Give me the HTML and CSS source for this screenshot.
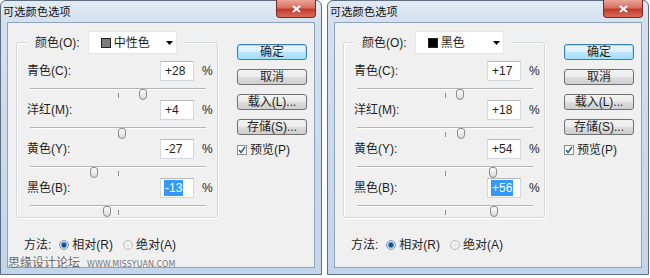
FILE: index.html
```html
<!DOCTYPE html>
<html lang="zh">
<head>
    <meta charset="UTF-8">
    <title>可选颜色选项</title>
    <link rel="stylesheet" href="styles.css">
</head>
<body>
<div class="page">

    <!-- left dialog: 中性色 -->
    <div class="dialog">
        <div class="titlebar">
            <span class="title">可选颜色选项</span>
            <span class="close"><svg width="9" height="8" viewBox="0 0 9 8"><path d="M1 1 L8 7 M8 1 L1 7" stroke="#fff" stroke-width="2"/></svg></span>
        </div>
        <div class="client">
            <div class="main">
                <div class="group">
                    <div class="group-head">
                        <span class="label">颜色(O):</span>
                        <div class="select">
                            <span class="swatch swatch-gray"></span>
                            <span class="select-text">中性色</span>
                            <svg class="arrow" width="7" height="4" viewBox="0 0 7 4"><path d="M0 0 H7 L3.5 4 Z" fill="#000"/></svg>
                        </div>
                    </div>
                    <div class="rows">
                        <div class="row">
                            <div class="row-head">
                                <span class="row-label">青色(C):</span>
                                <span class="field">+28</span>
                                <span class="pct">%</span>
                            </div>
                            <div class="slider"><div class="track"></div><span class="tick"></span><span class="thumb" style="left: 64%"></span></div>
                        </div>
                        <div class="row">
                            <div class="row-head">
                                <span class="row-label">洋红(M):</span>
                                <span class="field">+4</span>
                                <span class="pct">%</span>
                            </div>
                            <div class="slider"><div class="track"></div><span class="tick"></span><span class="thumb" style="left: 52%"></span></div>
                        </div>
                        <div class="row">
                            <div class="row-head">
                                <span class="row-label">黄色(Y):</span>
                                <span class="field">-27</span>
                                <span class="pct">%</span>
                            </div>
                            <div class="slider"><div class="track"></div><span class="tick"></span><span class="thumb" style="left: 36.5%"></span></div>
                        </div>
                        <div class="row">
                            <div class="row-head">
                                <span class="row-label">黑色(B):</span>
                                <span class="field"><span class="sel">-13</span></span>
                                <span class="pct">%</span>
                            </div>
                            <div class="slider"><div class="track"></div><span class="tick"></span><span class="thumb" style="left: 43.5%"></span></div>
                        </div>
                    </div>
                </div>
                <div class="method">
                    <span class="method-label">方法:</span>
                    <span class="radio checked"></span><span>相对(R)</span>
                    <span class="radio"></span><span>绝对(A)</span>
                </div>
            </div>
            <div class="side">
                <div class="btn btn-default">确定</div>
                <div class="btn">取消</div>
                <div class="btn btn-gap">载入(L)...</div>
                <div class="btn">存储(S)...</div>
                <div class="check-row">
                    <span class="checkbox"><svg width="8" height="8" viewBox="0 0 8 8"><path d="M1 4 L3 6.5 L7 1" stroke="#2b5f9e" stroke-width="1.6" fill="none"/></svg></span>
                    <span>预览(P)</span>
                </div>
            </div>
        </div>
    </div>

    <!-- right dialog: 黑色 -->
    <div class="dialog">
        <div class="titlebar">
            <span class="title">可选颜色选项</span>
            <span class="close"><svg width="9" height="8" viewBox="0 0 9 8"><path d="M1 1 L8 7 M8 1 L1 7" stroke="#fff" stroke-width="2"/></svg></span>
        </div>
        <div class="client">
            <div class="main">
                <div class="group">
                    <div class="group-head">
                        <span class="label">颜色(O):</span>
                        <div class="select">
                            <span class="swatch swatch-black"></span>
                            <span class="select-text">黑色</span>
                            <svg class="arrow" width="7" height="4" viewBox="0 0 7 4"><path d="M0 0 H7 L3.5 4 Z" fill="#000"/></svg>
                        </div>
                    </div>
                    <div class="rows">
                        <div class="row">
                            <div class="row-head">
                                <span class="row-label">青色(C):</span>
                                <span class="field">+17</span>
                                <span class="pct">%</span>
                            </div>
                            <div class="slider"><div class="track"></div><span class="tick"></span><span class="thumb" style="left: 58.5%"></span></div>
                        </div>
                        <div class="row">
                            <div class="row-head">
                                <span class="row-label">洋红(M):</span>
                                <span class="field">+18</span>
                                <span class="pct">%</span>
                            </div>
                            <div class="slider"><div class="track"></div><span class="tick"></span><span class="thumb" style="left: 59%"></span></div>
                        </div>
                        <div class="row">
                            <div class="row-head">
                                <span class="row-label">黄色(Y):</span>
                                <span class="field">+54</span>
                                <span class="pct">%</span>
                            </div>
                            <div class="slider"><div class="track"></div><span class="tick"></span><span class="thumb" style="left: 77%"></span></div>
                        </div>
                        <div class="row">
                            <div class="row-head">
                                <span class="row-label">黑色(B):</span>
                                <span class="field"><span class="sel">+56</span></span>
                                <span class="pct">%</span>
                            </div>
                            <div class="slider"><div class="track"></div><span class="tick"></span><span class="thumb" style="left: 78%"></span></div>
                        </div>
                    </div>
                </div>
                <div class="method">
                    <span class="method-label">方法:</span>
                    <span class="radio checked"></span><span>相对(R)</span>
                    <span class="radio"></span><span>绝对(A)</span>
                </div>
            </div>
            <div class="side">
                <div class="btn btn-default">确定</div>
                <div class="btn">取消</div>
                <div class="btn btn-gap">载入(L)...</div>
                <div class="btn">存储(S)...</div>
                <div class="check-row">
                    <span class="checkbox"><svg width="8" height="8" viewBox="0 0 8 8"><path d="M1 4 L3 6.5 L7 1" stroke="#2b5f9e" stroke-width="1.6" fill="none"/></svg></span>
                    <span>预览(P)</span>
                </div>
            </div>
        </div>
    </div>

    <div class="watermark">
        <span class="wm-cn">思缘设计论坛</span>
        <span class="wm-url">WWW.MISSYUAN.COM</span>
    </div>
</div>
</body>
</html>
```

FILE: styles.css
```css
body {
    margin: 0;
    background: #fff;
    font-family: "Liberation Sans", "Noto Sans CJK SC", sans-serif;
    font-size: 12px;
    line-height: 14px;
    color: #1e1e1e;
}
.page {
    position: relative;
    display: flex;
    gap: 5px;
    width: 650px;
    height: 278px;
}
.dialog {
    width: 322px;
    height: 275px;
    box-sizing: border-box;
    border: 1px solid #5d6d82;
    border-radius: 6px 6px 0 0;
    background: linear-gradient(to bottom, #e2eaf4 0, #d3e0ef 22px, #c2d5ea 100%);
    padding: 0 6px 6px;
    display: flex;
    flex-direction: column;
}
.titlebar {
    height: 21px;
    margin: 0 -6px;
    display: flex;
    justify-content: space-between;
    align-items: flex-start;
}
.title {
    padding: 4px 0 0 2px;
    font-size: 11px;
    letter-spacing: 0.3px;
    color: #111;
}
.close {
    width: 40px;
    height: 18px;
    margin: -1px 5px 0 0;
    box-sizing: border-box;
    border: 1px solid #7b2a22;
    border-top: none;
    border-radius: 0 0 4px 4px;
    background: linear-gradient(to bottom, #e9a697 0, #d7715f 45%, #c23a2b 55%, #d66d59 100%);
    display: flex;
    align-items: center;
    justify-content: center;
}
.client {
    flex: 1;
    display: flex;
    border: 1px solid #8ea4be;
    background: #f0f0f0;
}

/* left column */
.main {
    padding: 19px 0 0 8px;
    width: 202px;
}
.group {
    box-sizing: border-box;
    width: 202px;
    border: 1px solid #d2d9df;
    border-radius: 3px;
    box-shadow: 1px 1px 0 #fff, inset 1px 1px 0 #fff;
}
.group-head {
    display: flex;
    align-items: center;
    gap: 8px;
    width: fit-content;
    height: 23px;
    margin: -12px 0 0 10px;
    padding: 0 8px;
    background: #f0f0f0;
}
.select {
    display: flex;
    align-items: center;
    width: 89px;
    height: 23px;
    box-sizing: border-box;
    padding-left: 12px;
    background: #fff;
    border: 1px solid #e6e6e6;
}
.swatch {
    width: 10px;
    height: 10px;
    box-sizing: border-box;
    border: 1px solid #222;
}
.swatch-gray { background: #7d7d7d; }
.swatch-black { background: #000; }
.select-text {
    margin-left: 3px;
}
.arrow {
    margin: 0 3px 0 auto;
}
.rows {
    padding-top: 7px;
}
.row {
    height: 39px;
}
.row-head {
    display: flex;
    align-items: center;
    height: 20px;
    padding: 0 6px 0 10px;
}
.row-label {
    flex: 1;
}
.field {
    width: 34px;
    height: 20px;
    box-sizing: border-box;
    display: flex;
    align-items: center;
    padding-left: 4px;
    background: #fff;
    border: 1px solid #d3d8de;
    border-top-color: #b5b9bf;
}
.sel {
    background: #3399ff;
    color: #fff;
    line-height: 16px;
    padding: 0 1px;
    margin-left: -1px;
}
.pct {
    width: 9px;
    margin-left: 8px;
}
.slider {
    position: relative;
    height: 19px;
    margin: 0 11px 0 13px;
}
.track {
    margin-top: 7px;
    border-top: 1px solid #b3b3b3;
    border-bottom: 1px solid #fff;
}
.tick {
    position: absolute;
    left: 50%;
    top: 5px;
    width: 1px;
    height: 5px;
    background: #8e8e8e;
}
.thumb {
    position: absolute;
    top: 1px;
    width: 8px;
    height: 11px;
    margin-left: -4px;
    box-sizing: border-box;
    border: 1px solid #8b8b8b;
    border-radius: 3px 3px 4px 4px;
    background: linear-gradient(to bottom, #fdfdfd, #dadada);
}
.method {
    display: flex;
    align-items: center;
    height: 14px;
    margin: 20px 0 0 8px;
}
.method-label {
    margin-right: 8px;
}
.radio {
    width: 10px;
    height: 10px;
    box-sizing: border-box;
    border-radius: 50%;
    border: 1px solid #b9b9b9;
    background: radial-gradient(circle, #e6e6e6, #fafafa);
    margin-right: 3px;
}
.radio.checked {
    border-color: #8497ab;
    background: radial-gradient(circle, #0d3a66 0, #1f5d97 1.8px, #6fa7d6 2.8px, #d6e6f3 3.6px, #f7f7f7 4.5px);
}
.method .radio + span + .radio {
    margin-left: 10px;
}

/* right column */
.side {
    width: 70px;
    margin-left: 19px;
    padding-top: 21px;
}
.btn {
    height: 16px;
    box-sizing: border-box;
    border: 1px solid #707070;
    border-radius: 3px;
    background: linear-gradient(to bottom, #f3f3f3 0, #ebebeb 50%, #dddddd 50%, #cfcfcf 100%);
    display: flex;
    align-items: center;
    justify-content: center;
    margin-bottom: 9px;
}
.btn-default {
    border-color: #3c7fb1;
    background: linear-gradient(to bottom, #eaf6fd 0, #d9f0fc 50%, #bee6fd 50%, #a7d9f5 100%);
    box-shadow: inset 0 0 0 1px #9ee4f8;
}
.btn-gap {
    margin-top: 6px;
}
.check-row {
    display: flex;
    align-items: center;
    margin-top: 7px;
    height: 12px;
}
.checkbox {
    width: 10px;
    height: 10px;
    box-sizing: border-box;
    border: 1px solid #8e8f8f;
    background: #fff;
    margin-right: 3px;
    display: flex;
    align-items: center;
    justify-content: center;
}

.watermark {
    position: absolute;
    left: 8px;
    top: 256px;
    display: flex;
    align-items: baseline;
    gap: 7px;
    color: #6a6a6a;
}
.wm-cn {
    font-size: 12px;
}
.wm-url {
    font-family: "DejaVu Sans", sans-serif;
    font-size: 8px;
    color: #7a7a7a;
}
```
